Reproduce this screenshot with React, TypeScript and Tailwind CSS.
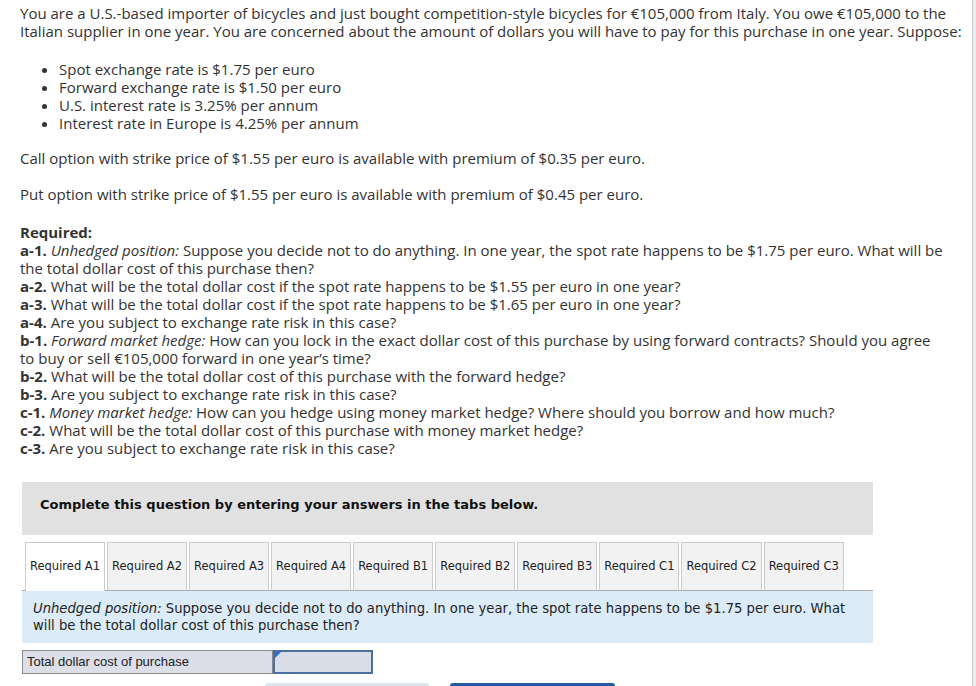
import React from "react";

const tabs = ["Required A1","Required A2","Required A3","Required A4","Required B1","Required B2","Required B3","Required C1","Required C2","Required C3"];

function Q({ label, children }: { label: string; children: React.ReactNode }) {
  return (
    <div>
      <b className="font-bold">{label}</b> {children}
    </div>
  );
}

export default function App() {
  return (
    <div className="flex w-[976px] h-[686px] overflow-hidden bg-white">
      <div className="w-[972px] relative">
        <div className="pl-[20px] pr-[10px] pt-[4px] text-[15px] leading-[18px] text-[#333]" style={{ fontFamily: "'Open Sans', sans-serif" }}>
          <p>You are a U.S.-based importer of bicycles and just bought competition-style bicycles for €105,000 from Italy. You owe €105,000 to the Italian supplier in one year. You are concerned about the amount of dollars you will have to pay for this purchase in one year. Suppose:</p>
          <ul className="mt-[20px] pl-[39px] list-disc">
            <li>Spot exchange rate is $1.75 per euro</li>
            <li>Forward exchange rate is $1.50 per euro</li>
            <li>U.S. interest rate is 3.25% per annum</li>
            <li>Interest rate in Europe is 4.25% per annum</li>
          </ul>
          <p className="mt-[17px]">Call option with strike price of $1.55 per euro is available with premium of $0.35 per euro.</p>
          <p className="mt-[18px]">Put option with strike price of $1.55 per euro is available with premium of $0.45 per euro.</p>
          <div className="mt-[20px] pr-[18px]">
            <div className="font-bold">Required:</div>
            <Q label="a-1."><i>Unhedged position:</i> Suppose you decide not to do anything. In one year, the spot rate happens to be $1.75 per euro. What will be the total dollar cost of this purchase then?</Q>
            <Q label="a-2.">What will be the total dollar cost if the spot rate happens to be $1.55 per euro in one year?</Q>
            <Q label="a-3.">What will be the total dollar cost if the spot rate happens to be $1.65 per euro in one year?</Q>
            <Q label="a-4.">Are you subject to exchange rate risk in this case?</Q>
            <Q label="b-1."><i>Forward market hedge:</i> How can you lock in the exact dollar cost of this purchase by using forward contracts? Should you agree to buy or sell €105,000 forward in one year’s time?</Q>
            <Q label="b-2.">What will be the total dollar cost of this purchase with the forward hedge?</Q>
            <Q label="b-3.">Are you subject to exchange rate risk in this case?</Q>
            <Q label="c-1."><i>Money market hedge:</i> How can you hedge using money market hedge? Where should you borrow and how much?</Q>
            <Q label="c-2.">What will be the total dollar cost of this purchase with money market hedge?</Q>
            <Q label="c-3.">Are you subject to exchange rate risk in this case?</Q>
          </div>
        </div>

        <div className="ml-[22px] w-[851px] mt-[25px]" style={{ fontFamily: "'DejaVu Sans', Verdana, sans-serif" }}>
          <div className="h-[53px] bg-[#e1e1e1] flex items-center pl-[18px] pb-[8px] text-[13px] font-bold text-[#111]">
            Complete this question by entering your answers in the tabs below.
          </div>
          <div className="mt-[7px] flex items-end gap-[2px] pl-[3px] border-b border-[#aaa] h-[49px]">
            {tabs.map((t, i) => (
              <div key={t} className={`h-[48px] px-[4px] flex items-center whitespace-nowrap text-[11.5px] text-[#222] border border-[#ccc] border-b-0 ${i === 0 ? "bg-white border-[#bbb] -mb-px h-[49px]" : "bg-[#f2f2f2]"}`}>
                {t}
              </div>
            ))}
          </div>
          <div className="bg-[#dcebf8] h-[52px] px-[11px] pt-[9px] text-[13.2px] leading-[17px] text-[#222]">
            <i>Unhedged position:</i> Suppose you decide not to do anything. In one year, the spot rate happens to be $1.75 per euro. What will be the total dollar cost of this purchase then?
          </div>
          <div className="mt-[7px] flex h-[24px]">
            <div className="w-[251px] bg-[#dcdfe8] border border-[#8a8a8a] flex items-center pl-[4px] text-[13px] text-[#222]" style={{ fontFamily: "'Liberation Sans', Arial, sans-serif" }}>
              Total dollar cost of purchase
            </div>
            <div className="relative w-[100px] bg-[#d9dde7] border-2 border-[#49709e]">
              <div className="absolute left-0 top-0 w-0 h-0 border-t-[6px] border-t-[#2f6bd1] border-r-[6px] border-r-transparent"></div>
            </div>
          </div>
          <div className="mt-[9px] flex">
            <div className="ml-[243px] w-[164px] h-[10px] bg-[#dce6f1] rounded-t-[3px]"></div>
            <div className="ml-[21px] w-[165px] h-[10px] bg-[#245ba0] rounded-t-[3px]"></div>
          </div>
        </div>
      </div>
      <div className="w-[4px] h-full bg-[#ececec] border-l border-[#cfcfcf]"></div>
    </div>
  );
}
